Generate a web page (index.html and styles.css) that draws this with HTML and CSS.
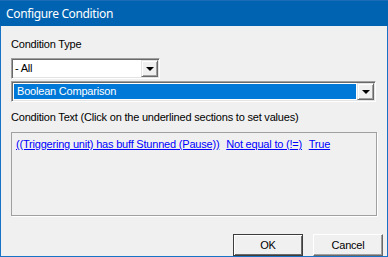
FILE: index.html
```html
<!DOCTYPE html>
<html>
<head>
<meta charset="utf-8">
<link rel="stylesheet" href="styles.css">
</head>
<body>
<div class="window">
  <div class="titlebar">Configure Condition</div>
  <div class="content">
    <div class="label first">Condition Type</div>
    <div class="combo small">
      <div class="combo-value">- All</div>
      <div class="combo-btn"><span class="arrow"></span></div>
    </div>
    <div class="combo wide">
      <div class="combo-value selected">Boolean Comparison</div>
      <div class="combo-btn"><span class="arrow"></span></div>
    </div>
    <div class="label second">Condition Text (Click on the underlined sections to set values)</div>
    <div class="textbox">
      <a class="link">((Triggering unit) has buff Stunned (Pause))</a>
      <a class="link">Not equal to (!=)</a>
      <a class="link">True</a>
    </div>
    <div class="buttons">
      <div class="btn default">OK</div>
      <div class="btn">Cancel</div>
    </div>
  </div>
</div>
</body>
</html>
```

FILE: styles.css
```css
html, body {
  margin: 0;
  padding: 0;
  background: #f0f0f0;
}
.window {
  width: 388px;
  height: 257px;
  box-sizing: border-box;
  border: 1px solid #1873c7;
  border-top: none;
  background: #f0f0f0;
  display: flex;
  flex-direction: column;
  font-family: "Liberation Sans", Arial, sans-serif;
  font-size: 11px;
  letter-spacing: -0.2px;
  color: #000;
}
.titlebar {
  height: 26px;
  margin: 0 -1px;
  background: #0063b1;
  color: #fff;
  font-family: "Noto Sans", "Open Sans", sans-serif;
  font-size: 12px;
  letter-spacing: -0.35px;
  line-height: 26px;
  padding-left: 6px;
  box-sizing: border-box;
  border-top: 1px solid #1a6cb8;
}
.content {
  padding: 0 10px;
  display: flex;
  flex-direction: column;
  flex: 1;
}
.label {
  line-height: 13px;
  height: 13px;
}
.label.first { margin-top: 12px; }
.label.second { margin-top: 9px; }
.combo {
  display: flex;
  height: 21px;
  box-sizing: border-box;
  border-top: 1px solid #a0a0a0;
  border-left: 1px solid #a0a0a0;
  border-right: 1px solid #fff;
  border-bottom: 1px solid #fff;
  box-shadow: inset 1px 1px 0 #696969, inset -1px -1px 0 #e3e3e3;
  background: #fff;
  padding: 2px;
}
.combo.small {
  width: 149px;
  margin-top: 7px;
}
.combo.wide {
  width: 365px;
  margin-top: 2px;
}
.combo-value {
  flex: 1;
  line-height: 15px;
  padding-left: 1px;
  white-space: nowrap;
}
.combo-value.selected {
  background: #0078d7;
  color: #fff;
  padding-left: 3px;
}
.combo-btn {
  width: 17px;
  height: 17px;
  margin: -1px -1px -1px 1px;
  box-sizing: border-box;
  background: #f0f0f0;
  border-top: 1px solid #e3e3e3;
  border-left: 1px solid #e3e3e3;
  border-right: 1px solid #696969;
  border-bottom: 1px solid #696969;
  box-shadow: inset 1px 1px 0 #fff, inset -1px -1px 0 #a0a0a0;
  display: flex;
  align-items: center;
  justify-content: center;
}
.arrow {
  width: 0;
  height: 0;
  border-left: 4px solid transparent;
  border-right: 4px solid transparent;
  border-top: 4px solid #000;
  margin-top: 1px;
}
.textbox {
  margin-top: 8px;
  width: 366px;
  height: 84px;
  box-sizing: border-box;
  border: 1px solid #a0a0a0;
  box-shadow: 1px 1px 0 #fff;
  padding: 5px 4px;
  line-height: 13px;
  white-space: nowrap;
}
.link {
  color: #0000ff;
  text-decoration: underline;
  margin-right: 4px;
}
.buttons {
  display: flex;
  justify-content: flex-end;
  gap: 10px;
  margin-top: 18px;
  margin-right: -6px;
}
.btn {
  width: 70px;
  height: 22px;
  box-sizing: border-box;
  line-height: 20px;
  text-align: center;
  border-top: 1px solid #fff;
  border-left: 1px solid #fff;
  border-right: 1px solid #696969;
  border-bottom: 1px solid #696969;
  box-shadow: inset -1px -1px 0 #a0a0a0;
  background: #f0f0f0;
}
.btn.default {
  border: 1px solid #3c3c3c;
  box-shadow: inset 1px 1px 0 #fff, inset -1px -1px 0 #696969;
}
```
